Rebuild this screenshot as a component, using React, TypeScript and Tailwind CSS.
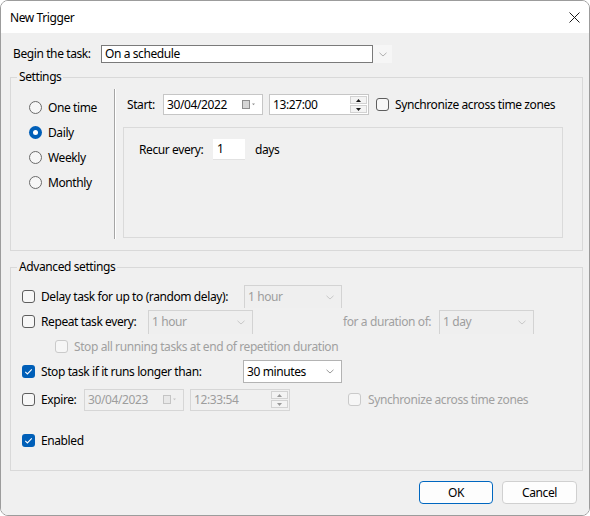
import React from "react";

function Chevron({ color = "#9a9a9a" }: { color?: string }) {
  return (
    <svg width="8" height="5" viewBox="0 0 8 5">
      <path d="M0.5 0.8 L4 4 L7.5 0.8" fill="none" stroke={color} strokeWidth="1" />
    </svg>
  );
}

function Checkbox({ checked = false, disabled = false }: { checked?: boolean; disabled?: boolean }) {
  if (checked) {
    return (
      <div className="w-[13px] h-[13px] rounded-[3px] bg-[#005fb8] flex items-center justify-center shrink-0">
        <svg width="13" height="13" viewBox="0 0 13 13">
          <path d="M3.3 6.8 L5.4 8.9 L9.8 4.4" fill="none" stroke="#ffffff" strokeWidth="1.1" />
        </svg>
      </div>
    );
  }
  return (
    <div
      className={
        disabled
          ? "w-[13px] h-[13px] rounded-[3px] border border-[#cacaca] bg-[#f6f6f6] shrink-0"
          : "w-[13px] h-[13px] rounded-[3px] border border-[#5e5e5e] bg-[#f7f7f7] shrink-0"
      }
    />
  );
}

function Radio({ checked = false }: { checked?: boolean }) {
  if (checked) {
    return (
      <div className="w-[13px] h-[13px] rounded-full bg-[#005fb8] flex items-center justify-center shrink-0">
        <div className="w-[5px] h-[5px] rounded-full bg-white" />
      </div>
    );
  }
  return <div className="w-[13px] h-[13px] rounded-full border border-[#6b6b6b] bg-[#f7f7f7] shrink-0" />;
}

function CalIcon({ disabled = false }: { disabled?: boolean }) {
  const c = disabled ? "#c4c4c4" : "#8e8e8e";
  const f = disabled ? "#e8e8e8" : "#d6d6d6";
  return (
    <svg width="16" height="9" viewBox="0 0 16 9">
      <rect x="0.5" y="0.5" width="7" height="8" fill={f} stroke={c} strokeWidth="1" />
      <path d="M10 3.5 L13 3.5 L11.5 5.2 Z" fill={c} />
    </svg>
  );
}

function Spinner({ disabled = false }: { disabled?: boolean }) {
  const t = disabled ? "#9a9a9a" : "#1a1a1a";
  return (
    <div className="flex flex-col gap-[1px] mr-[1px]">
      <div className="w-[17px] h-[8px] border border-[#d2d2d2] bg-[#f3f3f3] flex items-center justify-center">
        <svg width="5" height="3" viewBox="0 0 5 3">
          <path d="M0 3 L2.5 0 L5 3 Z" fill={t} />
        </svg>
      </div>
      <div className="w-[17px] h-[8px] border border-[#d2d2d2] bg-[#f3f3f3] flex items-center justify-center">
        <svg width="5" height="3" viewBox="0 0 5 3">
          <path d="M0 0 L2.5 3 L5 0 Z" fill={t} />
        </svg>
      </div>
    </div>
  );
}

function Dropdown({
  value,
  width,
  height,
  disabled = false,
}: {
  value: string;
  width: string;
  height: string;
  disabled?: boolean;
}) {
  return (
    <div
      className={
        (disabled
          ? "border border-b-0 border-[#d3d3d3] bg-[#efefef] text-[#9d9d9d] "
          : "border border-[#b3b3b3] bg-white text-[#000000] ") +
        width +
        " " +
        height +
        " flex items-center pl-[3px] pr-[7px] justify-between shrink-0"
      }
    >
      <span>{value}</span>
      <Chevron color={disabled ? "#c8c8c8" : "#9a9a9a"} />
    </div>
  );
}

export default function App() {
  return (
    <div className="w-[590px] h-[516px] bg-white">
      <div className="w-[590px] h-[516px] border border-[#9c9c9c] rounded-[8px] overflow-hidden flex flex-col font-['Noto_Sans',sans-serif] text-[12px] tracking-[-0.4px] text-[#000000]">
        {/* Title bar */}
        <div className="h-[32px] bg-white flex items-center justify-between pl-[9px] pr-[9px] pt-[1px] shrink-0">
          <span className="text-[12px]">New Trigger</span>
          <svg width="11" height="11" viewBox="0 0 11 11">
            <path d="M0.5 0.5 L10.5 10.5 M10.5 0.5 L0.5 10.5" stroke="#1a1a1a" strokeWidth="1" />
          </svg>
        </div>

        {/* Body */}
        <div className="flex-1 bg-[#f0f0f0] pl-[9px] pt-[12px] flex flex-col">
          {/* Begin the task */}
          <div className="h-[18px] flex items-center">
            <div className="w-[91px] pl-[3px]">Begin the task:</div>
            <div className="w-[272px] h-[18px] border border-[#7a7a7a] bg-white flex items-center pl-[3px]">
              On a schedule
            </div>
            <div className="w-[19px] h-[18px] bg-[#f6f6f6] flex items-center justify-center">
              <Chevron color="#b0b0b0" />
            </div>
          </div>

          {/* Settings */}
          <fieldset className="mt-[6px] w-[573px] border border-[#d9d9d9]">
            <legend className="ml-[6px] px-[2px] leading-[16px]">Settings</legend>
            <div className="h-[165px] flex">
              <div className="w-[103px] pl-[18px] pt-[10px] flex flex-col">
                {[
                  ["One time", false],
                  ["Daily", true],
                  ["Weekly", false],
                  ["Monthly", false],
                ].map(([label, checked]) => (
                  <div key={label as string} className="h-[25px] flex items-center gap-[6px]">
                    <Radio checked={checked as boolean} />
                    <span>{label as string}</span>
                  </div>
                ))}
              </div>
              <div className="mt-[4px] w-[2px] h-[150px] border-l border-[#a5a5a5] bg-white" />
              <div className="ml-[7px] pt-[9px] flex flex-col">
                <div className="h-[21px] flex items-center pl-[4px]">
                  <div className="w-[36px]">Start:</div>
                  <div className="w-[100px] h-[21px] border border-[#c6c6c6] bg-white flex items-center justify-between pl-[3px] pr-[4px]">
                    <span>30/04/2022</span>
                    <CalIcon />
                  </div>
                  <div className="ml-[6px] w-[100px] h-[21px] border border-[#c6c6c6] bg-white flex items-center justify-between pl-[3px]">
                    <span>13:27:00</span>
                    <Spinner />
                  </div>
                  <div className="ml-[7px]">
                    <Checkbox />
                  </div>
                  <span className="ml-[6px]">Synchronize across time zones</span>
                </div>
                <div className="mt-[12px] w-[440px] h-[111px] border border-[#dadada] pt-[11px] pl-[15px]">
                  <div className="h-[21px] flex items-center">
                    <div className="w-[74px]">Recur every:</div>
                    <div className="w-[32px] h-[21px] bg-white border-b border-[#e2e2e2] flex items-center pl-[4px]">
                      1
                    </div>
                    <span className="ml-[10px]">days</span>
                  </div>
                </div>
              </div>
            </div>
          </fieldset>

          {/* Advanced settings */}
          <fieldset className="mt-[8px] w-[573px] border border-[#d9d9d9]">
            <legend className="ml-[6px] px-[2px] leading-[16px]">Advanced settings</legend>
            <div className="pt-[9px] pl-[11px] pb-[17px] flex flex-col">
              <div className="h-[25px] flex items-center">
                <div className="w-[222px] flex items-center gap-[6px]">
                  <Checkbox />
                  <span>Delay task for up to (random delay):</span>
                </div>
                <Dropdown value="1 hour" width="w-[98px]" height="h-[23px]" disabled />
              </div>
              <div className="h-[25px] flex items-center">
                <div className="w-[126px] flex items-center gap-[6px]">
                  <Checkbox />
                  <span>Repeat task every:</span>
                </div>
                <Dropdown value="1 hour" width="w-[105px]" height="h-[24px]" disabled />
                <div className="ml-[90px] w-[96px] text-[#a0a0a0]">for a duration of:</div>
                <Dropdown value="1 day" width="w-[95px]" height="h-[24px]" disabled />
              </div>
              <div className="h-[25px] flex items-center pl-[33px] gap-[6px]">
                <Checkbox disabled />
                <span className="text-[#a0a0a0]">Stop all running tasks at end of repetition duration</span>
              </div>
              <div className="h-[25px] flex items-center">
                <div className="w-[221px] flex items-center gap-[6px]">
                  <Checkbox checked />
                  <span>Stop task if it runs longer than:</span>
                </div>
                <Dropdown value="30 minutes" width="w-[99px]" height="h-[23px]" />
              </div>
              <div className="mt-[3px] h-[25px] flex items-center">
                <div className="w-[62px] flex items-center gap-[6px]">
                  <Checkbox />
                  <span>Expire:</span>
                </div>
                <div className="w-[100px] h-[22px] border border-[#d6d6d6] bg-[#f0f0f0] text-[#9d9d9d] flex items-center justify-between pl-[3px] pr-[4px]">
                  <span>30/04/2023</span>
                  <CalIcon disabled />
                </div>
                <div className="ml-[6px] w-[100px] h-[22px] border border-[#d6d6d6] bg-[#f0f0f0] text-[#9d9d9d] flex items-center justify-between pl-[3px]">
                  <span>12:33:54</span>
                  <Spinner disabled />
                </div>
                <div className="ml-[58px]">
                  <Checkbox disabled />
                </div>
                <span className="ml-[7px] text-[#a0a0a0]">Synchronize across time zones</span>
              </div>
              <div className="mt-[16px] h-[25px] flex items-center gap-[6px]">
                <Checkbox checked />
                <span>Enabled</span>
              </div>
            </div>
          </fieldset>

          {/* Buttons */}
          <div className="mt-[10px] flex justify-end pr-[12px] gap-[9px]">
            <button className="w-[74px] h-[23px] rounded-[4px] border border-[#0067c0] bg-[#fdfdfd] flex items-center justify-center">
              OK
            </button>
            <button className="w-[75px] h-[23px] rounded-[4px] border border-[#d0d0d0] bg-[#fdfdfd] flex items-center justify-center">
              Cancel
            </button>
          </div>
        </div>
      </div>
    </div>
  );
}
